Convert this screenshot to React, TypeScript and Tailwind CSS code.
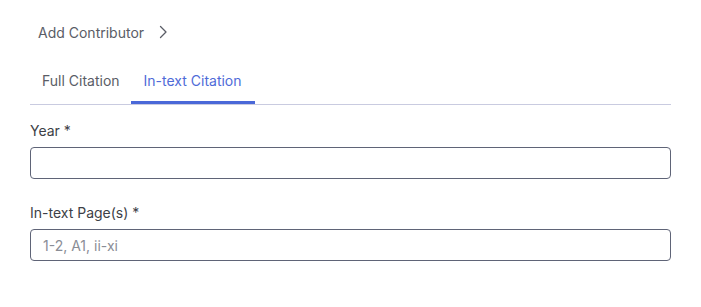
export default function App() {
  return (
    <div className="min-h-screen w-[701px] bg-white px-[30px] pt-[22px] font-['Inter',sans-serif] text-[14px]">
      <div className="flex items-center gap-[14px] pl-[8px] h-[20px] text-[#5a5d66]">
        <span>Add Contributor</span>
        <svg width="10" height="14" viewBox="0 0 10 14" fill="none" className="text-[#5a5d66]">
          <path d="M2.5 1.5 L8 7 L2.5 12.5" stroke="currentColor" strokeWidth="1.3" strokeLinecap="round" strokeLinejoin="round" />
        </svg>
      </div>

      <div className="mt-[14px] flex border-b border-[#c9cbe0]">
        <button className="h-[48px] pl-[12px] pr-[11px] text-[#5a5d66]">Full Citation</button>
        <button className="h-[48px] px-[13px] text-[#4f6bd8] border-b-[3px] border-[#4a68d8] -mb-px pt-[3px]">In-text Citation</button>
      </div>

      <div className="mt-[16px]">
        <label className="block h-[20px] leading-[20px] text-[#3d3f47]">Year *</label>
        <input className="mt-[6px] block w-full h-[32px] rounded-[4px] border border-[#5f6477] px-[12px] outline-none" />
      </div>

      <div className="mt-[24px]">
        <label className="block h-[20px] leading-[20px] text-[#3d3f47]">In-text Page(s) *</label>
        <input
          placeholder="1-2, A1, ii-xi"
          className="mt-[6px] block w-full h-[32px] rounded-[4px] border border-[#5f6477] px-[12px] outline-none placeholder:text-[#8a8d96]"
        />
      </div>
    </div>
  );
}
